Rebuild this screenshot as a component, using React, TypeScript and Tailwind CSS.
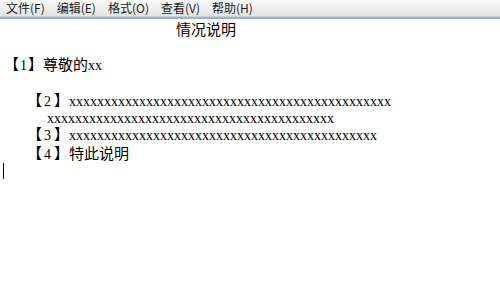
import React from 'react';

const menus = ['文件(F)', '编辑(E)', '格式(O)', '查看(V)', '帮助(H)'];

const Num: React.FC<{ n: number; wide?: boolean }> = ({ n, wide }) => (
  <span className="text-[15px]">
    【
    <span className={wide ? 'text-[14px] ml-[2px] mr-[3px]' : 'text-[14px] ml-[1px] mr-[1px]'}>{n}</span>
    】
  </span>
);

const App: React.FC = () => {
  return (
    <div className="w-[500px] h-[282px] bg-white overflow-hidden relative">
      {/* menu bar */}
      <div className="h-[16px] flex items-center gap-[12px] pl-[6px] bg-gradient-to-b from-[#fcfcfc] to-[#e2e2e2] text-[12px] leading-[16px] text-[#1b1b1b] font-['Noto_Sans_CJK_SC',sans-serif]">
        {menus.map((m) => (
          <span key={m}>{m}</span>
        ))}
      </div>
      <div className="h-px bg-[#d0d0d0]" />
      <div className="h-[2px] bg-[#93b4d5]" />

      {/* document */}
      <div className="text-black text-[14px] font-['Liberation_Serif','Noto_Sans_CJK_SC',serif]">
        <div className="mt-[2px] pl-[176px] leading-[18px] text-[15px]">情况说明</div>
        <div className="mt-[17px] pl-[4px] leading-[18px]">
          <Num n={1} />
          <span className="text-[15px]">尊敬的</span>xx
        </div>
        <div className="mt-[18px] pl-[27px] leading-[17px]">
          <Num n={2} wide />
          {'x'.repeat(46)}
        </div>
        <div className="pl-[47px] leading-[17px]">{'x'.repeat(41)}</div>
        <div className="pl-[27px] leading-[17px]">
          <Num n={3} wide />
          {'x'.repeat(44)}
        </div>
        <div className="pl-[27px] leading-[21px]">
          <Num n={4} wide />
          <span className="text-[15px]">特此说明</span>
        </div>
      </div>
      {/* caret */}
      <div className="absolute left-[3px] top-[163px] w-px h-[16px] bg-black" />
    </div>
  );
};

export default App;
